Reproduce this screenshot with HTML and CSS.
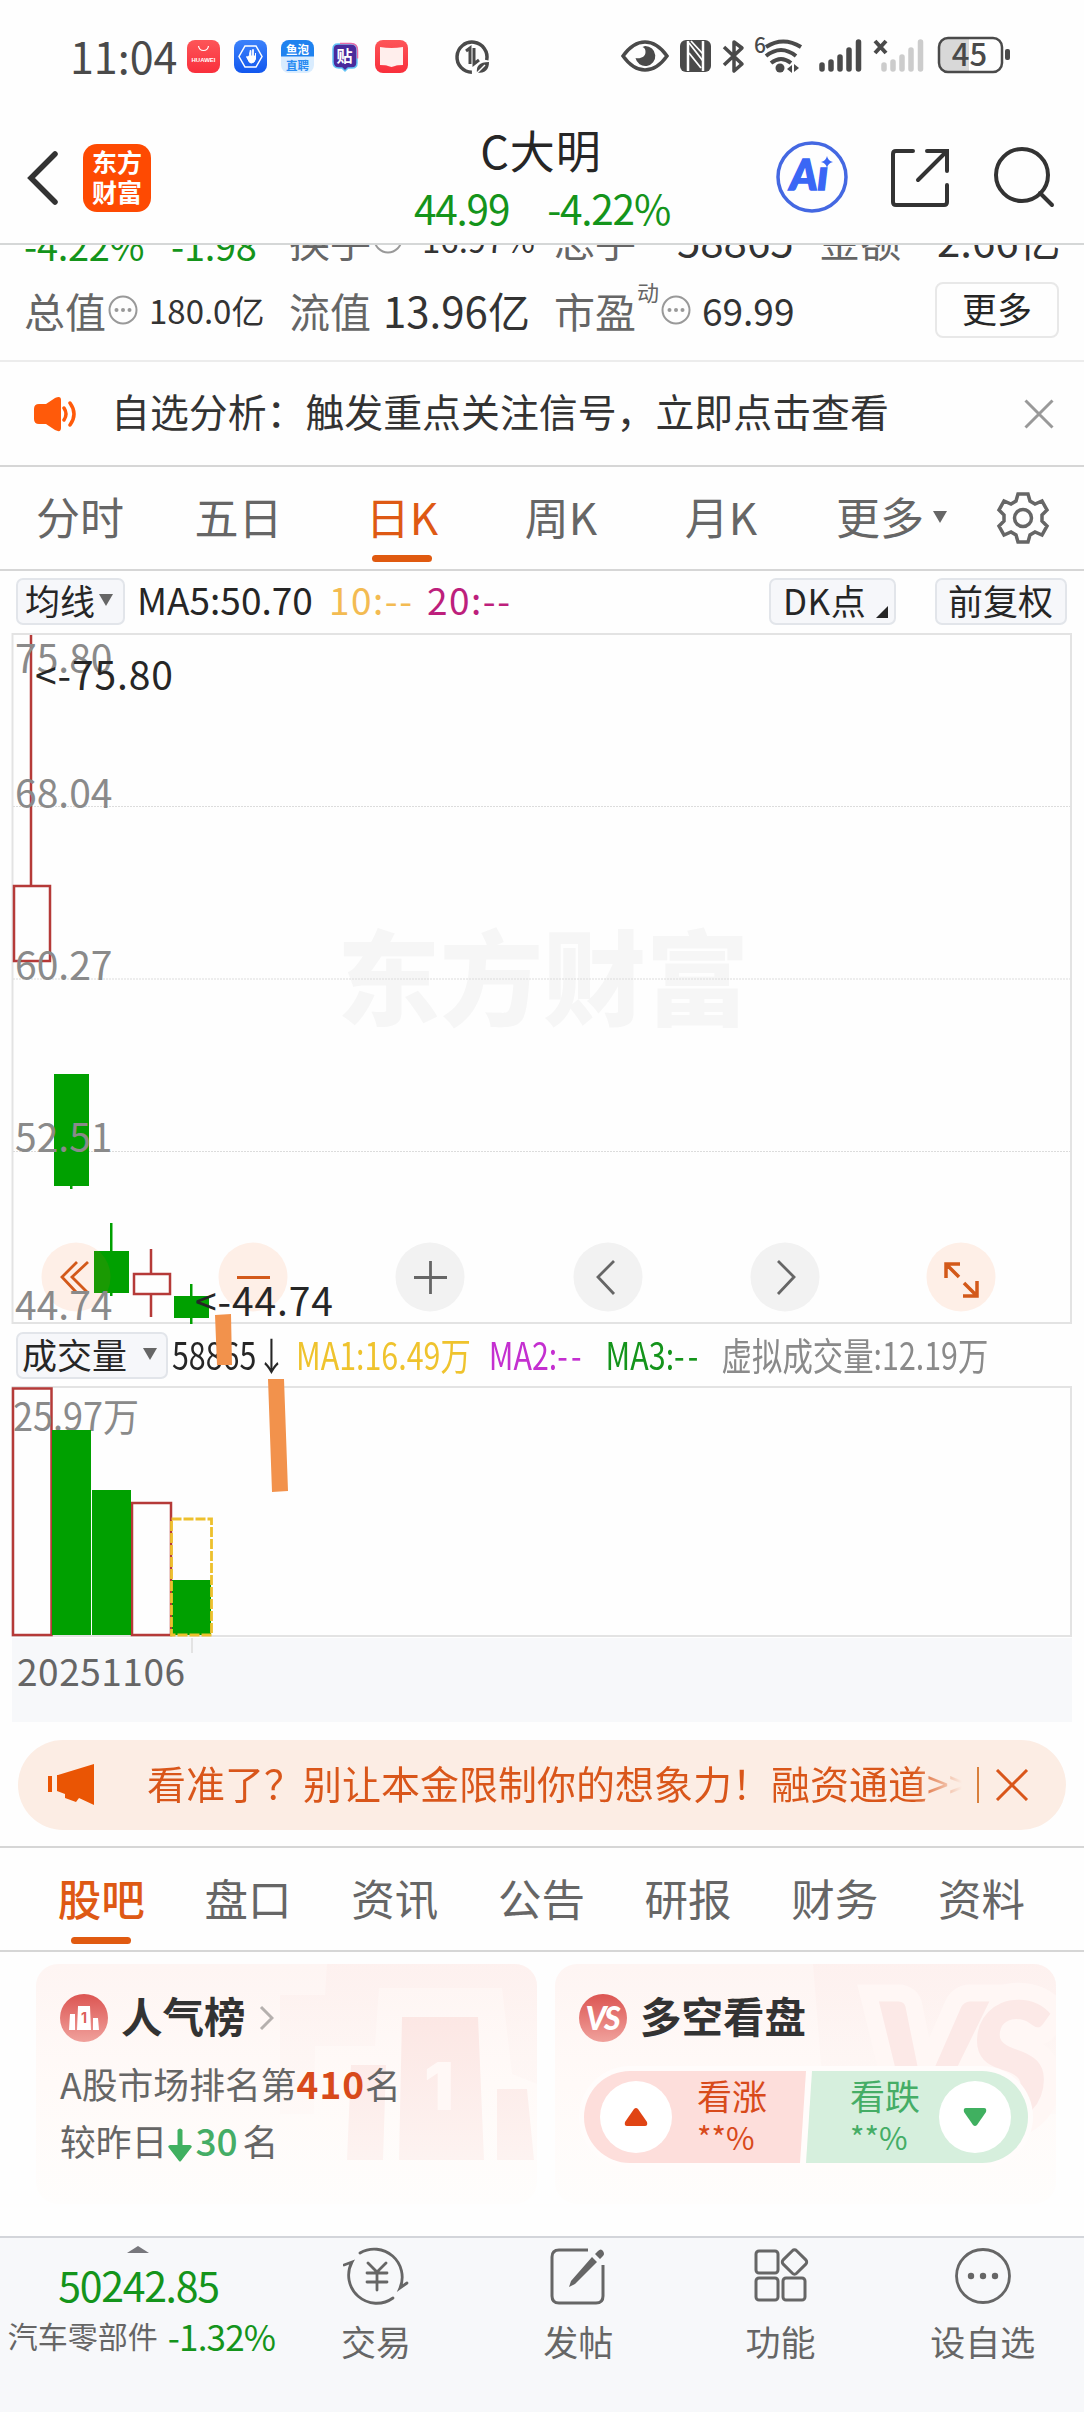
FILE: index.html
```html
<!DOCTYPE html>
<html lang="zh-CN">
<head>
  <meta charset="UTF-8">
  <title>C大明 44.99 -4.22%</title>
  <link rel="stylesheet" href="styles.css">
</head>
<body>

  <div class="status-bar">
    <span class="clock">11:04</span>
    <svg class="status-apps" width="310" height="40" viewBox="0 0 310 40">
      <defs>
        <linearGradient id="redApp" x1="0" y1="0" x2="0" y2="1"><stop offset="0" stop-color="#fd5558"/><stop offset="1" stop-color="#f92f3c"/></linearGradient>
        <linearGradient id="blueApp" x1="0" y1="0" x2="0" y2="1"><stop offset="0" stop-color="#3c82fb"/><stop offset="1" stop-color="#1257ee"/></linearGradient>
      </defs>
      <rect x="0" y="3" width="33" height="33" rx="8" fill="url(#redApp)"/>
      <path d="M11.500 9c1 6 9 6 10 0" fill="none" stroke="#fff" stroke-width="1.200"/>
      <text x="16.500" y="24.500" class="app-huawei">HUAWEI</text>
      <rect x="47" y="3" width="33" height="33" rx="8" fill="url(#blueApp)"/>
      <path d="M58 9h11l6 10.500-6 10.500H58l-6-10.500z" fill="none" stroke="#fff" stroke-width="1.500"/>
      <path d="M60 20l3 4v-8M63.500 22v-8M66 21v-8" fill="none" stroke="#fff" stroke-width="1.800" stroke-linecap="round"/>
      <path d="M61.500 19h7v-3v6q-1 4-4 4t-4-5z" fill="#fff" stroke="#fff"/>
      <rect x="94" y="3" width="33" height="33" rx="8" fill="#d9ecfe"/>
      <path d="M94 19.500V11a8 8 0 0 1 8-8h17a8 8 0 0 1 8 8v8.500z" fill="#1f82ef"/>
      <text x="110.500" y="16.500" class="app-yp white">鱼泡</text>
      <text x="110.500" y="32.500" class="app-yp blue">直聘</text>
      <path d="M151 7h13q6 0 6 6v13q0 5-5 5h-4l-3 3-3-3h-3q-6 0-6-6V12q0-5 5-5z" fill="#4a2a9c" stroke="#63c3f5" stroke-width="1.500" stroke-linejoin="round"/>
      <path d="M153 6.500h11q6.500 0 6.500 7v8" fill="none" stroke="#e86aa8" stroke-width="1.500"/>
      <text x="157.500" y="25" class="app-tie">贴</text>
      <rect x="188" y="3" width="33" height="33" rx="8" fill="url(#redApp)"/>
      <path d="M193 10q6 1 11.500 1T216 10v18q-6 0-8 1l-3.500 1-3.500-1q-2-1-8-1z" fill="#ffeeec"/>
      <path d="M300 21a15 15 0 1 0-13 14" transform="rotate(8 285 20)" fill="none" stroke="#4a4a4a" stroke-width="3.500"/>
      <path d="M279 14l4-3v16M287 11v16l5-4" fill="none" stroke="#4a4a4a" stroke-width="3"/>
      <path d="M302 25c-10 0-13 4-12 11 8 0 12-3 12-11z" fill="#4a4a4a"/>
      <path d="M290 36l8-8" stroke="#fff" stroke-width="1.500"/>
    </svg>
    <svg class="status-sys" width="400" height="44" viewBox="0 0 400 44">
      <path d="M4 21Q14 7 26 7t22 14Q38 35 26 35T4 21z" fill="none" stroke="#4a4a4a" stroke-width="3.500"/>
      <path d="M26 11a10 10 0 1 1-9.500 12c5 1 10-1 10-6 0-3-1-4-3-5z" fill="#4a4a4a"/>
      <rect x="61" y="5" width="31" height="32" rx="6" fill="#4a4a4a"/>
      <path d="M69 6v30M84 6v30" stroke="#fff" stroke-width="2.500"/>
      <path d="M70 8l14 18M70 18l12 15M72 6l12 13" stroke="#fff" stroke-width="1.800"/>
      <path d="M105 12l18 17-8 7V7l8 6-18 17" fill="none" stroke="#4a4a4a" stroke-width="3.500" stroke-linejoin="round"/>
      <text x="135" y="18" class="wifi-six">6</text>
      <g fill="none" stroke="#4a4a4a" stroke-width="4">
        <path d="M147 12q17-11 35 0"/><path d="M147 21q15-12 30 0"/><path d="M152 28q10-8 20 0"/>
      </g>
      <circle cx="161" cy="33" r="4.500" fill="#4a4a4a"/>
      <path d="M168 34l5-4v8M180 33l-5-4v8" fill="#4a4a4a"/>
      <g stroke="#4a4a4a" stroke-width="5.500" stroke-linecap="round">
        <path d="M203 30v4M212 27v7M221 22v12M230 15v19M239.500 7v27"/>
      </g>
      <path d="M256 6l11 12M267 6l-11 12" stroke="#4a4a4a" stroke-width="4"/>
      <g stroke="#ccc" stroke-width="5.500" stroke-linecap="round">
        <path d="M265 30v4M274 27v7M283 22v12M292 15v19M301.500 7v27"/>
      </g>
      <path d="M329 4h21v32h-21q-9 0-9-9V13q0-9 9-9z" fill="#d8d8d8"/>
      <rect x="320" y="3" width="63" height="34" rx="9" fill="none" stroke="#4a4a4a" stroke-width="2.500"/>
      <rect x="386" y="14" width="5" height="11" rx="2" fill="#4a4a4a"/>
      <text x="350.500" y="31" class="battery">45</text>
    </svg>
  </div>

  <header class="topbar">
    <svg class="back" width="32" height="56" viewBox="0 0 32 56"><path d="M28 4L4 28l24 24" fill="none" stroke="#333" stroke-width="5.500" stroke-linecap="round"/></svg>
    <div class="brand">东方<br>财富</div>
    <div class="quote-title">
      <div class="name">C大明</div>
      <div class="price"><span>44.99</span><span>-4.22%</span></div>
    </div>
    <svg class="ai" width="74" height="74" viewBox="0 0 74 74">
      <circle cx="37" cy="37" r="34" fill="none" stroke="#4468e2" stroke-width="3.500"/>
      <text x="34" y="50" class="ai-text">Aı</text>
      <path d="M52 16q1 5 6 6-5 1-6 6-1-5-6-6 5-1 6-6z" fill="#3a67f5"/>
    </svg>
    <svg class="share" width="60" height="60" viewBox="0 0 60 60"><path d="M23 3H6q-3 0-3 3v48q0 3 3 3h48q3 0 3-3V37M37 3h20v20M57 3L28 32" fill="none" stroke="#333" stroke-width="4" stroke-linecap="round"/></svg>
    <svg class="search" width="62" height="62" viewBox="0 0 62 62"><circle cx="29" cy="29" r="26" fill="none" stroke="#333" stroke-width="4"/><path d="M47 47l12 12" stroke="#333" stroke-width="4" stroke-linecap="round"/></svg>
  </header>

  <section class="stats">
    <div class="stats-row first">
      <span class="green">-4.22%</span><span class="green">-1.98</span>
      <span class="label">换手</span><svg width="30" height="30" viewBox="0 0 30 30"><use href="#more"/></svg><span class="small">16.97%</span>
      <span class="label">总手</span><span class="big">58865</span>
      <span class="label">金额</span><span class="big">2.66亿</span>
    </div>
    <div class="stats-row second">
      <span class="label">总值</span>
      <svg width="30" height="30" viewBox="0 0 30 30">
        <g id="more"><circle cx="15" cy="15" r="13.500" fill="none" stroke="#999" stroke-width="2"/><circle cx="8.500" cy="15" r="2" fill="#999"/><circle cx="15" cy="15" r="2" fill="#999"/><circle cx="21.500" cy="15" r="2" fill="#999"/></g>
      </svg>
      <span class="small">180.0亿</span>
      <span class="label">流值</span><span class="big">13.96亿</span>
      <span class="label">市盈</span><span class="sup">动</span>
      <svg width="30" height="30" viewBox="0 0 30 30"><use href="#more"/></svg>
      <span class="mid">69.99</span>
      <button class="more-btn">更多</button>
    </div>
  </section>

  <section class="alert">
    <svg width="46" height="38" viewBox="0 0 46 38">
      <path d="M1 14q0-5 5-5h7L22 3q6-3 6 2v28q0 5-6 2l-9-6H6q-5 0-5-5z" fill="#ff5a0a"/>
      <path d="M31 13q4 6 0 12M37 8q8 11 0 22" fill="none" stroke="#ff5a0a" stroke-width="3.500" stroke-linecap="round"/>
    </svg>
    <p>自选分析：触发重点关注信号，立即点击查看</p>
    <svg width="30" height="30" viewBox="0 0 30 30"><path d="M1.500 1.500l27 27M28.500 1.500l-27 27" stroke="#999" stroke-width="3"/></svg>
  </section>

  <nav class="period-tabs">
    <a>分时</a><a>五日</a><a class="active">日K</a><a>周K</a><a>月K</a>
    <a>更多<i class="caret"></i></a>
    <svg width="54" height="54" viewBox="-27 -27 54 54">
      <path d="M-5-24H5L7-17L12-14L19-17L24-8L19-3V3L24 8L19 17L12 14L7 17L5 24H-5L-7 17L-12 14L-19 17L-24 8L-19 3V-3L-24-8L-19-17L-12-14L-7-17Z" fill="none" stroke="#666" stroke-width="3.500"/>
      <circle r="8.500" fill="none" stroke="#666" stroke-width="3.500"/>
    </svg>
  </nav>

  <section class="ma-row">
    <button class="chip ma-chip">均线<i class="caret"></i></button>
    <span class="ma5">MA5:50.70</span><span class="ma10">10:--</span><span class="ma20">20:--</span>
    <button class="chip dk-chip">DK点<i class="corner"></i></button>
    <button class="chip fq-chip">前复权</button>
  </section>

  <section class="charts">
    <svg class="kline" width="1084" height="696" viewBox="0 630 1084 696">
      <text x="543" y="1018" class="watermark">东方财富</text>
      <rect x="12.500" y="634" width="1058.500" height="689" fill="none" stroke="#e3e3e3" stroke-width="2"/>
      <path d="M13 806.500H1070M13 979H1070M13 1151.500H1070" stroke="#dcdcdc" stroke-dasharray="2 1"/>

      <g stroke="#b53a38" stroke-width="2.500" fill="none">
        <path d="M31 635V885M151 1249v24M151 1295v22"/>
        <rect x="14" y="886" width="36" height="75"/>
        <rect x="134" y="1274" width="36" height="20"/>
      </g>
      <g fill="#00a000">
        <rect x="54" y="1074" width="35" height="112"/><rect x="70" y="1185" width="2.500" height="4"/>
        <rect x="94" y="1251" width="35" height="42"/><rect x="110" y="1223" width="2.500" height="73"/>
        <rect x="174" y="1296" width="35" height="22"/><rect x="190" y="1284" width="2.500" height="40"/>
      </g>

      <g class="axis">
        <text x="15" y="673">75.80</text>
        <text x="15" y="808">68.04</text>
        <text x="15" y="980">60.27</text>
        <text x="15" y="1152">52.51</text>
      </g>

      <g fill="#ff6a1a" fill-opacity=".1">
        <circle cx="76" cy="1277" r="34.500"/><circle cx="253" cy="1277" r="34.500"/><circle cx="961" cy="1277" r="34.500"/>
      </g>
      <g fill="#f2f2f2">
        <circle cx="430" cy="1277" r="34.500"/><circle cx="608" cy="1277" r="34.500"/><circle cx="785" cy="1277" r="34.500"/>
      </g>
      <g fill="none" stroke="#d3591a" stroke-width="2.800">
        <path d="M77 1262l-15 15 15 16M88 1262l-16 15 16 16M237 1277.500h33"/>
        <path d="M946 1278v-14h14M947 1265l12 12M977 1281v15h-14M976 1295l-12-12" stroke-width="3.500"/>
      </g>
      <path d="M414 1277.500h33M430.500 1261v33M614 1261l-16 16 16 17M778 1261l16 16-16 17" fill="none" stroke="#666" stroke-width="2.800"/>

      <text x="15" y="1320" class="axis">44.74</text>
      <text x="35" y="690" class="mark" textLength="138">&lt;-75.80</text>
      <text x="195" y="1316" class="mark" textLength="138">&lt;-44.74</text>
    </svg>

    <div class="vol-row">
      <button class="chip vol-chip">成交量<i class="caret"></i></button>
      <div class="vol-values">
        <span class="v-now">58865↓</span><span class="v-ma1">MA1:16.49万</span><span class="v-ma2">MA2:<i>--</i></span><span class="v-ma3">MA3:<i>--</i></span><span class="v-virtual">虚拟成交量:12.19万</span>
      </div>
    </div>

    <svg class="volume" width="1084" height="340" viewBox="0 1384 1084 340">
      <rect x="12" y="1638" width="1060" height="84" fill="#f7f8fa"/>
      <rect x="12.500" y="1387" width="1058.500" height="249" fill="none" stroke="#e3e3e3" stroke-width="2"/>
      <g fill="none" stroke="#b53a38" stroke-width="2.500">
        <rect x="13" y="1388.500" width="38.500" height="246.500"/>
        <rect x="132" y="1503" width="39" height="132"/>
      </g>
      <text x="13" y="1431" class="axis" textLength="126" lengthAdjust="spacingAndGlyphs">25.97万</text>
      <g fill="#00a000">
        <rect x="52" y="1430" width="39" height="205"/><rect x="92" y="1490" width="39" height="145"/><rect x="172" y="1580" width="39" height="55"/>
      </g>
      <rect x="171.500" y="1519" width="40" height="116" fill="none" stroke="#edc02d" stroke-width="2.800" stroke-dasharray="10 2"/>
      <path d="M192 1638v15" stroke="#e3e3e3" stroke-width="2"/>
      <text x="17" y="1686" class="date" textLength="168">20251106</text>
    </svg>

    <!-- hand drawn marks over the chart -->
    <svg class="strokes" width="90" height="190" viewBox="210 1310 90 190">
      <path d="M215 1315l16-1 1 51h-15zM268 1379h16l4 112-16 1z" fill="#f2924c"/>
    </svg>
  </section>

  <section class="promo">
    <svg width="48" height="42" viewBox="0 0 48 42">
      <path d="M0 12h4v16H0zM9 11h1L46 0v41l-15-7-3 4-11-4v-4l-8-3z" fill="#ea5504"/>
    </svg>
    <p>看准了？别让本金限制你的想象力！融资通道&gt;&gt;</p>
    <i class="divider"></i>
    <svg width="34" height="32" viewBox="0 0 34 32"><path d="M2 1l30 30M32 1L2 31" stroke="#d9561a" stroke-width="3"/></svg>
  </section>

  <nav class="info-tabs">
    <a class="active">股吧</a><a>盘口</a><a>资讯</a><a>公告</a><a>研报</a><a>财务</a><a>资料</a>
  </nav>

  <section class="cards">
    <div class="card rank">
      <svg class="card-bg" width="501" height="240" viewBox="0 0 501 240">
        <defs>
          <linearGradient id="fadeOut" x1="0" y1="0" x2="0" y2="1"><stop offset="0" stop-color="#fdefed"/><stop offset="1" stop-color="#fef8f6"/></linearGradient>
          <linearGradient id="fadeIn" x1="0" y1="0" x2="0" y2="1"><stop offset="0" stop-color="#fce7e4"/><stop offset="1" stop-color="#fdf3f1"/></linearGradient>
        </defs>
        <path d="M291 0H501V120L476 110L466 24H343L339 82H279L278 150H244V31H289z" fill="url(#fadeOut)" opacity=".7"/>
        <path d="M366 53h76l6 143h-85zM315 101h35l-3 95h-36zM461 125h30l7 71h-37z" fill="url(#fadeIn)"/>
        <text x="403" y="146" class="bg-one">1</text>
      </svg>
      <h3>
        <svg width="48" height="48" viewBox="0 0 48 48">
          <defs><linearGradient id="badge" x1="0" y1="0" x2="0" y2="1"><stop offset="0" stop-color="#dc5552"/><stop offset="1" stop-color="#f0a19c"/></linearGradient></defs>
          <circle cx="24" cy="24" r="24" fill="url(#badge)"/>
          <path d="M10 20h5v16H9zM18 12h12l1 24H17zM33 24h5l1 12h-6z" fill="#fff"/>
          <text x="24" y="29" class="badge-one">1</text>
        </svg>
        <span>人气榜</span>
        <svg width="15" height="26" viewBox="0 0 15 26"><path d="M2 2l11 11L2 24" fill="none" stroke="#b5b0ae" stroke-width="3"/></svg>
      </h3>
      <p>A股市场排名第<b class="rank-no">410</b>名</p>
      <p>较昨日<svg class="down" width="24" height="34" viewBox="0 0 24 34"><path d="M9.500 2q2.500-3 5 0v15H22q3 1 1 3L13 33q-1 1-2 0L1 20q-2-2 1-3h7.500z" fill="#40b060"/></svg><b class="rank-down">30</b> 名</p>
    </div>

    <div class="card versus">
      <svg class="card-bg" width="501" height="240" viewBox="0 0 501 240">
        <path d="M258 0H501V150H270z" fill="url(#fadeOut)" opacity=".7"/>
        <text x="400" y="158" class="bg-vs">VS</text>
      </svg>
      <h3>
        <svg width="48" height="48" viewBox="0 0 48 48"><circle cx="24" cy="24" r="24" fill="url(#badge)"/><text x="23" y="36" class="badge-vs">VS</text></svg>
        <span>多空看盘</span>
      </h3>
      <div class="poll">
        <div class="up">
          <span class="knob"><svg width="24" height="20" viewBox="0 0 24 20"><path d="M10 2q2-2 4 0l9 13q1 4-2 4H3q-3 0-2-4z" fill="#e04414"/></svg></span>
          <span>看涨<br><em>**%</em></span>
        </div>
        <div class="down-side">
          <span>看跌<br><em>**%</em></span>
          <span class="knob"><svg width="24" height="20" viewBox="0 0 24 20"><path d="M10 18q2 2 4 0l9-13q1-4-2-4H3Q0 1 1 5z" fill="#40b060"/></svg></span>
        </div>
      </div>
    </div>
  </section>

  <footer class="bottom-bar">
    <div class="index">
      <i class="tri"></i>
      <div class="index-value">50242.85</div>
      <div class="index-name">汽车零部件 <span>-1.32%</span></div>
    </div>
    <a>
      <svg width="66" height="60" viewBox="0 0 66 60">
        <g fill="none" stroke="#666" stroke-width="2.800" stroke-linecap="round">
          <path d="M17 7A28 28 0 0 1 57 42l7-5M50 52A28 28 0 0 1 9 16l-8 3"/>
          <path d="M25 17l9 9 9-9M34 26v18M24 27h20M24 36h20"/>
        </g>
      </svg>
      交易
    </a>
    <a>
      <svg width="58" height="60" viewBox="0 0 58 60">
        <path d="M39 4H10q-7 0-7 7v39q0 7 7 7h37q7 0 7-7V19" fill="none" stroke="#666" stroke-width="3"/>
        <path d="M43 11l5 5-22 22-6 3 2-6zM46 8l3-3q3-3 5 0t0 5l-3 3z" fill="#666"/>
      </svg>
      发帖
    </a>
    <a>
      <svg width="56" height="60" viewBox="0 0 56 60">
        <g fill="none" stroke="#666" stroke-width="3">
          <rect x="3" y="5" width="22" height="22" rx="3"/><rect x="3" y="32" width="22" height="22" rx="3"/><rect x="30" y="32" width="22" height="22" rx="3"/>
          <rect x="32" y="6.500" width="19" height="19" rx="3" transform="rotate(45 41.500 16)"/>
        </g>
      </svg>
      功能
    </a>
    <a>
      <svg width="60" height="60" viewBox="0 0 60 60">
        <circle cx="30" cy="30" r="26.500" fill="none" stroke="#666" stroke-width="2.800"/>
        <circle cx="18" cy="30" r="3.200" fill="#666"/><circle cx="30" cy="30" r="3.200" fill="#666"/><circle cx="42" cy="30" r="3.200" fill="#666"/>
      </svg>
      设自选
    </a>
  </footer>

</body>
</html>
```
FILE: styles.css
```css
* {
  box-sizing: border-box;
}

body {
  font-family: "Noto Sans CJK SC", sans-serif;
  margin: 0;
  width: 1084px;
  height: 2412px;
  overflow: hidden;
  background-color: #fefefe;
  color: #333;
  display: flex;
  flex-direction: column;
}

svg {
  display: block;
  flex-shrink: 0;
}

button {
  font-family: inherit;
  color: #262626;
  padding: 0;
}

p, h3 {
  margin: 0;
}

/* status bar */
.status-bar {
  height: 112px;
  display: flex;
  align-items: center;
  padding-left: 70px;
  flex-shrink: 0;
}

.clock {
  font-size: 43px;
  line-height: 64px;
  width: 117px;
  color: #4a4a4a;
  margin-top: -2px;
}

.status-apps {
  margin-top: 2px;
}

.status-sys {
  margin-left: 122px;
  margin-top: 2px;
}

.app-huawei {
  font: bold 6px "Liberation Sans", sans-serif;
  fill: #fff;
  text-anchor: middle;
}

.app-yp {
  font-size: 11.500px;
  font-weight: 700;
  text-anchor: middle;
}

.white {
  fill: #fff;
}

.blue {
  fill: #2a8bf2;
}

.app-tie {
  font-size: 16px;
  font-weight: 700;
  fill: #fff;
  text-anchor: middle;
}

.wifi-six {
  font-size: 21px;
  font-weight: 500;
  fill: #4a4a4a;
}

.battery {
  font-size: 31px;
  font-weight: 500;
  fill: #4a4a4a;
  text-anchor: middle;
}

/* top bar */
.topbar {
  height: 133px;
  border-bottom: 2px solid #d5d7d7;
  display: flex;
  align-items: flex-start;
  padding-left: 27px;
  flex-shrink: 0;
}

.back {
  margin-top: 38px;
}

.brand {
  width: 68px;
  height: 68px;
  margin: 32px 0 0 24px;
  padding-top: 2px;
  border-radius: 14px;
  background-color: #fe4a02;
  color: #fff;
  font-size: 25px;
  font-weight: 700;
  line-height: 30px;
  text-align: center;
}

.quote-title {
  width: 624px;
  padding-left: 156px;
  text-align: center;
}

.name {
  font-size: 45px;
  line-height: 54px;
  letter-spacing: 1px;
  margin-top: 11px;
  color: #262626;
}

.price {
  display: flex;
  justify-content: center;
  gap: 38px;
  margin-left: 2px;
  font-size: 40.500px;
  line-height: 62px;
  letter-spacing: -1.200px;
  color: #14941b;
}

.ai {
  margin-top: 28px;
}

.ai-text {
  font: italic 900 42px Lato, sans-serif;
  fill: #3a67f5;
  stroke: #3a67f5;
  stroke-width: 1.500px;
  text-anchor: middle;
}

.share {
  margin: 36px 0 0 41px;
}

.search {
  margin: 34px 0 0 43px;
}

/* figures */
.stats {
  height: 117px;
  border-bottom: 2px solid #ececec;
  overflow: hidden;
  flex-shrink: 0;
}

.stats-row {
  display: grid;
  align-items: center;
  height: 60px;
  margin-left: 24px;
  white-space: nowrap;
  line-height: 60px;
}

.first {
  grid-template-columns: 147px 118px 84px 49px 132px 123px 142px 118px 1fr;
  margin-top: -42px;
}

.second {
  grid-template-columns: 84px 41px 140px 94px 171px 83px 24px 41px 233px 124px;
  margin-top: 17px;
}

.green {
  color: #14941b;
  font-size: 38px;
  letter-spacing: -0.3px;
  margin-top: 12px;
}

.label {
  color: #666;
  font-size: 41px;
}

.small {
  font-size: 33px;
}

.mid {
  font-size: 37px;
}

.big {
  font-size: 42px;
}

.sup {
  font-size: 22px;
  color: #666;
  align-self: start;
  line-height: 34px;
  margin-top: -6px;
}

.more-btn {
  height: 56px;
  border: 2px solid #e8e8e8;
  border-radius: 8px;
  background: none;
  font-size: 35px;
  line-height: 46px;
  padding-bottom: 5px;
}

/* alert line */
.alert {
  height: 105px;
  border-bottom: 2px solid #d6d6d6;
  display: flex;
  align-items: center;
  padding: 0 30px 0 33px;
  flex-shrink: 0;
}

.alert p {
  flex: 1;
  margin-left: 32px;
  font-size: 38.900px;
  line-height: 60px;
  margin-top: -7px;
}

/* period tabs */
.period-tabs {
  height: 104px;
  border-bottom: 2px solid #d6d6d6;
  display: grid;
  grid-template-columns: 160px 157px 170px 148px 172px 154px 1fr;
  align-items: center;
  font-size: 44px;
  line-height: 95px;
  color: #666;
  flex-shrink: 0;
}

.period-tabs a {
  text-align: center;
  margin-top: -3px;
}

.period-tabs a:nth-child(6) {
  display: flex;
  align-items: center;
  margin-left: 29px;
}

.period-tabs svg {
  margin-left: 35px;
}

.active {
  color: #de5914;
  display: flex;
  flex-direction: column;
  align-items: center;
}

.period-tabs .active {
  height: 102px;
  margin-top: 0;
  line-height: 98px;
}

.active::after {
  content: "";
  width: 60px;
  height: 7px;
  border-radius: 4px;
  background-color: #e05a10;
  margin-top: -10px;
}

.caret {
  border: 7.500px solid transparent;
  border-top: 12px solid #666;
  border-bottom: 0;
  margin-left: 9px;
}

/* moving averages */
.ma-row {
  height: 59px;
  display: flex;
  align-items: flex-start;
  padding: 7px 0 0 16px;
  font-size: 37px;
  line-height: 43px;
  flex-shrink: 0;
}

.chip {
  height: 47px;
  border: 2px solid #e2e5ea;
  border-radius: 7px;
  background-color: #f6f7fa;
  font-size: 35px;
  line-height: 38px;
  padding-bottom: 3px;
  display: flex;
  align-items: center;
  white-space: nowrap;
  flex-shrink: 0;
}

.ma-chip {
  width: 109px;
  padding-left: 7px;
}

.ma-chip .caret {
  margin-left: 4px;
}

.ma5 {
  width: 192px;
  margin-left: 12px;
  color: #262626;
}

.ma10 {
  width: 98px;
  color: #f3bb52;
  letter-spacing: 1.500px;
}

.ma20 {
  color: #bd1f7c;
  width: 342px;
  letter-spacing: 1.500px;
}

.dk-chip {
  width: 127px;
  padding-left: 12px;
  letter-spacing: 0.5px;
}

.corner {
  border: 6px solid #262626;
  border-top-color: transparent;
  border-left-color: transparent;
  margin: 24px 0 0 10px;
}

.fq-chip {
  width: 132px;
  margin-left: 39px;
  padding-left: 11px;
}

/* charts */
.charts {
  position: relative;
  height: 1094px;
  flex-shrink: 0;
}

.axis {
  font-size: 39px;
  fill: #8a8a8a;
}

.mark {
  font-size: 39px;
  fill: #262626;
}

.date {
  font-size: 37px;
  fill: #666;
}

.watermark {
  font-size: 103px;
  font-weight: 900;
  fill: #f6f6f6;
  text-anchor: middle;
}

.vol-row {
  height: 58px;
  display: flex;
  align-items: flex-start;
  padding: 6px 0 0 16px;
}

.vol-chip {
  width: 152px;
  padding-left: 4px;
}

.vol-chip .caret {
  margin-left: 16px;
}

.vol-values {
  width: 1136px;
  flex-shrink: 0;
  margin-left: 4px;
  display: grid;
  grid-template-columns: 155px 241px 146px 145px 1fr;
  font-size: 38px;
  line-height: 43px;
  white-space: nowrap;
  transform: scaleX(0.8);
  transform-origin: left;
}

.vol-values i {
  font-style: normal;
  letter-spacing: 4px;
}

.v-now {
  color: #262626;
}

.v-ma1 {
  color: #efc32d;
}

.v-ma2 {
  color: #c42fd0;
}

.v-ma3 {
  color: #14941b;
}

.v-virtual {
  color: #8a8a8a;
}

.strokes {
  position: absolute;
  left: 210px;
  top: 680px;
}

/* promo banner */
.promo {
  height: 90px;
  margin: 16px 18px;
  padding: 0 37px 0 30px;
  border-radius: 45px;
  background-color: #fcede4;
  display: flex;
  align-items: center;
  flex-shrink: 0;
}

.promo p {
  width: 815px;
  overflow: hidden;
  white-space: nowrap;
  margin: -7px 0 0 51px;
  font-size: 39px;
  line-height: 60px;
  background: linear-gradient(90deg, #d9561a 94%, #fcede4 100%);
  background-clip: text;
  -webkit-background-clip: text;
  color: transparent;
}

.divider {
  width: 2px;
  height: 36px;
  margin: 0 16px 0 15px;
  background-color: #d9803c;
}

/* info tabs */
.info-tabs {
  height: 106px;
  border: 2px solid #d6d6d6;
  border-width: 2px 0;
  padding: 0 28px;
  display: grid;
  grid-template-columns: repeat(7, 146.700px);
  font-size: 43.500px;
  line-height: 99px;
  text-align: center;
  color: #666;
  flex-shrink: 0;
}

.info-tabs .active {
  font-weight: 500;
}

/* cards */
.cards {
  display: flex;
  gap: 18px;
  padding: 12px 28px 0 36px;
  height: 284px;
  flex-shrink: 0;
}

.card {
  position: relative;
  width: 501px;
  height: 240px;
  padding: 27px 24px 0;
  border-radius: 22px;
  overflow: hidden;
  flex-shrink: 0;
  background: linear-gradient(#fef5f3, #fffaf8 50%, #fefdfc);
}

.card-bg {
  position: absolute;
  left: 0;
  top: 0;
}

.card h3 {
  position: relative;
  display: flex;
  align-items: center;
  gap: 13px;
  height: 54px;
  font-size: 41.500px;
  font-weight: 700;
  line-height: 60px;
}

.card h3 span {
  margin-top: -6px;
}

.card p {
  position: relative;
  font-size: 35.800px;
  line-height: 57px;
  color: #666;
  display: flex;
  align-items: center;
  white-space: pre;
}

.card h3 + p {
  margin-top: 10px;
}

.rank-no {
  color: #d84a1b;
  font-size: 37px;
  letter-spacing: 1px;
}

.rank-down {
  color: #45ad66;
  font-size: 37px;
  font-weight: 500;
  margin-right: -3px;
}

.down {
  margin: 9px 3px 0 1px;
}

.bg-one {
  font: 900 66px Inter, sans-serif;
  fill: #fff8f6;
  text-anchor: middle;
}

.badge-one {
  font: bold 14px Inter, sans-serif;
  fill: #dc5f5a;
  text-anchor: middle;
}

.badge-vs {
  font: italic 900 32px Lato, sans-serif;
  letter-spacing: -2px;
  fill: #fff;
  text-anchor: middle;
}

.bg-vs {
  font: italic 900 165px Lato, sans-serif;
  letter-spacing: -12px;
  fill: #fce9e7;
  stroke: #fff7f5;
  stroke-width: 34px;
  paint-order: stroke;
  text-anchor: middle;
}

.poll {
  position: relative;
  display: flex;
  width: 454px;
  height: 102px;
  margin-top: 21px;
  padding: 5px;
  border-radius: 51px;
  background-color: #fffcfb;
  font-size: 35px;
  line-height: 40px;
}

.poll em {
  font-style: normal;
  font-size: 31px;
  line-height: 30px;
}

.up, .down-side {
  display: flex;
  align-items: center;
  height: 92px;
  width: 222px;
}

.up > span:last-child, .down-side > span:first-child {
  margin-top: -4px;
}

.up {
  background-color: #fddedb;
  color: #d84a1b;
  border-radius: 46px 0 0 46px;
  clip-path: polygon(0 0, 100% 0, calc(100% - 6px) 100%, 0 100%);
  padding-left: 16px;
  gap: 25px;
}

.down-side {
  background-color: #d6efdd;
  color: #45ad66;
  border-radius: 0 46px 46px 0;
  clip-path: polygon(6px 0, 100% 0, 100% 100%, 0 100%);
  padding-left: 44px;
  gap: 19px;
}

.knob {
  width: 72px;
  height: 72px;
  border-radius: 50%;
  background-color: #fff;
  display: flex;
  align-items: center;
  justify-content: center;
}

/* bottom bar */
.bottom-bar {
  flex: 1;
  border-top: 2px solid #d3d5da;
  background-color: #f7f8fa;
  display: flex;
}

.index {
  width: 275px;
  display: flex;
  flex-direction: column;
  align-items: center;
}

.tri {
  border: 11px solid transparent;
  border-bottom: 7px solid #77777c;
  border-top: 0;
  margin-top: 8px;
}

.index-value {
  font-size: 41px;
  line-height: 50px;
  letter-spacing: -1.300px;
  color: #14941b;
  margin: 6px 0 0 2px;
}

.index-name {
  font-size: 30px;
  line-height: 44px;
  white-space: nowrap;
  color: #666;
  display: flex;
  align-items: center;
  gap: 10px;
  margin: 2px 0 0 8px;
}

.index-name span {
  font-size: 35px;
  letter-spacing: -0.800px;
  color: #14941b;
  margin-top: 3px;
}

.bottom-bar a {
  width: 202.300px;
  display: flex;
  flex-direction: column;
  align-items: center;
  padding-top: 8px;
  font-size: 35px;
  line-height: 50px;
  gap: 10px;
  color: #666;
}
```
